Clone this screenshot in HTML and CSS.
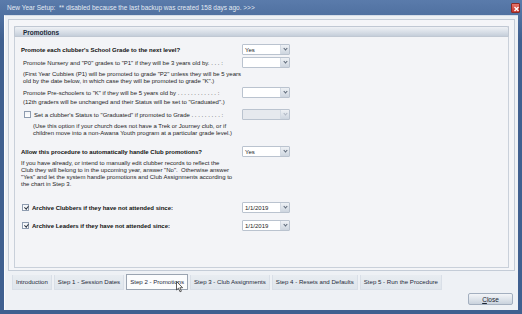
FILE: index.html
```html
<!DOCTYPE html>
<html lang="en">
  <head>
    <meta charset="UTF-8" />
    <meta name="viewport" content="width=device-width, initial-scale=1.0" />
    <title>New Year Setup</title>
    <link rel="stylesheet" href="styles.css">
  </head>
  <body>
    <div class="window">
      <div class="titlebar">
        <span class="title">New Year Setup:&nbsp; ** disabled because the last backup was created 158 days ago. &gt;&gt;&gt;</span>
        <span class="close_x">
          <svg width="9" height="10" viewBox="0 0 9 10"><path d="M2.5 3 L6.5 7 M6.5 3 L2.5 7" stroke="#fff" stroke-width="1.4" /></svg>
        </span>
      </div>

      <div class="client">
        <div class="page">
          <div class="group">
            <div class="group_head">Promotions</div>
            <div class="group_body">
              <div class="row r1">
                <span class="label bold">Promote each clubber's School Grade to the next level?</span>
                <div class="combo"><span>Yes</span><i></i></div>
              </div>
              <div class="row r2">
                <span class="label indent">Promote Nursery and "P0" grades to "P1" if they will be 3 years old by. . . . :</span>
                <div class="combo"><span></span><i></i></div>
              </div>
              <p class="note n1">(First Year Cubbies (P1) will be promoted to grade "P2" unless they will be 5 years<br>old by the date below, in which case they will be promoted to grade "K".)</p>
              <div class="row r3">
                <span class="label indent">Promote Pre-schoolers to "K" if they will be 5 years old by . . . . . . . . . . . . :</span>
                <div class="combo"><span></span><i></i></div>
              </div>
              <p class="note n2">(12th graders will be unchanged and their Status will be set to "Graduated".)</p>
              <div class="row r4">
                <span class="label check_label"><b class="check"></b>Set a clubber's Status to "Graduated" if promoted to Grade . . . . . . . . . :</span>
                <div class="combo disabled"><span></span><i></i></div>
              </div>
              <p class="note n3">(Use this option if your church does not have a Trek or Journey club, or if<br>children move into a non-Awana Youth program at a particular grade level.)</p>
              <div class="row r5">
                <span class="label bold">Allow this procedure to automatically handle Club promotions?</span>
                <div class="combo"><span>Yes</span><i></i></div>
              </div>
              <p class="para">If you have already, or intend to manually edit clubber records to reflect the<br>Club they will belong to in the upcoming year, answer "No".&nbsp; Otherwise answer<br>"Yes" and let the system handle promotions and Club Assignments according to<br>the chart in Step 3.</p>
              <div class="row r6">
                <span class="label bold check_label"><b class="check on"></b>Archive Clubbers if they have not attended since:</span>
                <div class="combo"><span>1/1/2019</span><i></i></div>
              </div>
              <div class="row r7">
                <span class="label bold check_label"><b class="check on"></b>Archive Leaders if they have not attended since:</span>
                <div class="combo"><span>1/1/2019</span><i></i></div>
              </div>
            </div>
          </div>
        </div>

        <div class="tabs">
          <span class="tab">Introduction</span>
          <span class="tab">Step 1 - Session Dates</span>
          <span class="tab active">Step 2 - Promotions
            <svg class="cursor" width="8" height="12" viewBox="0 0 8 12"><path d="M0.5 0.5 L0.5 9 L2.5 7.2 L4 10.8 L5.4 10.2 L3.9 6.7 L6.6 6.7 Z" fill="#fff" stroke="#333" stroke-width="0.8" /></svg>
          </span>
          <span class="tab">Step 3 - Club Assignments</span>
          <span class="tab">Step 4 - Resets and Defaults</span>
          <span class="tab">Step 5 - Run the Procedure</span>
        </div>

        <div class="footer">
          <button class="close_btn"><u>C</u>lose</button>
        </div>
      </div>
    </div>
  </body>
</html>
```

FILE: styles.css
```css
* {
  margin: 0;
  padding: 0;
  box-sizing: border-box;
}

body {
  width: 522px;
  height: 314px;
  overflow: hidden;
  background: #46689a;
  font-family: "Liberation Sans", Arial, sans-serif;
  font-size: 6px;
  color: #1e1e1e;
}

.window {
  height: 314px;
  display: flex;
  flex-direction: column;
  padding: 0 4px 4px 4px;
  background: linear-gradient(#5a7bab, #3f6090 40px, #3f6090);
}

.titlebar {
  height: 15px;
  display: flex;
  align-items: center;
  justify-content: space-between;
  padding: 0 0 0 3px;
  margin-right: -2px;

  .title {
    color: #e3eaf3;
    font-size: 6.5px;
  }

  .close_x {
    width: 9px;
    height: 10px;
    margin-top: 1px;
    background: linear-gradient(#e8766b, #c8332a);
    border: 1px solid #8e2a24;
    border-radius: 1px;
    display: grid;
    place-items: center;

    svg {
      display: block;
    }
  }
}

.client {
  flex: 1;
  display: flex;
  flex-direction: column;
  background: #eef1f5;
  border-top: 1px solid #d5dde8;
  border-left: 1px solid #fbfcfe;
  padding: 3px 3px 0 3px;
}

.page {
  height: 252px;
  background: #f4f5f8;
  border: 1px solid #c4ccd7;
  padding: 6px 5px 2px 5px;
}

.group {
  height: 100%;
  border: 1px solid #c9d0da;
  border-top: none;
  background: #f3f4f7;
  display: flex;
  flex-direction: column;
}

.group_head {
  height: 11px;
  line-height: 11px;
  padding-left: 8px;
  font-weight: bold;
  font-size: 6.5px;
  color: #1c2a3a;
  background: linear-gradient(#eef1f5, #d6dde6 60%, #c5ceda);
  border: 1px solid #c0c8d3;
  border-radius: 2px 2px 0 0;
  margin: 0 -1px;
}

.group_body {
  padding: 6px 0 0 6px;
  display: flex;
  flex-direction: column;
}

.row {
  display: grid;
  grid-template-columns: 221px 48px;
  align-items: center;
  height: 11px;
}

.label {
  white-space: nowrap;
  display: flex;
  align-items: center;
}

.bold {
  font-weight: bold;
  color: #111;
}

.indent {
  padding-left: 2px;
}

.check_label {
  padding-left: 3px;
}

.bold.check_label {
  padding-left: 1px;
}

.check {
  width: 7px;
  height: 7px;
  border: 1px solid #8e9cb0;
  background: linear-gradient(#f2f4f7, #fff);
  margin-right: 3px;
  position: relative;

  &.on::after {
    content: "";
    position: absolute;
    left: 1.5px;
    top: 0;
    width: 1.5px;
    height: 3px;
    border: solid #2a3340;
    border-width: 0 1px 1px 0;
    transform: rotate(40deg);
  }
}

.note {
  line-height: 7px;
  padding-left: 2px;
  white-space: nowrap;
}

.para {
  line-height: 7px;
  white-space: nowrap;
}

.combo {
  height: 11px;
  border: 1px solid #bac3cf;
  border-radius: 1px;
  background: #fff;
  display: flex;
  align-items: center;

  span {
    flex: 1;
    padding-left: 2px;
    font-size: 6px;
  }

  i {
    width: 9px;
    height: 9px;
    background: linear-gradient(#eef1f5, #cdd5df);
    border-left: 1px solid #d3dae3;
    position: relative;

    &::after {
      content: "";
      position: absolute;
      left: 3px;
      top: 2px;
      width: 2px;
      height: 2px;
      border: solid #5a6676;
      border-width: 0 1px 1px 0;
      transform: rotate(45deg);
    }
  }

  &.disabled {
    background: #e6e9ee;

    i::after {
      border-color: #b0b8c4;
    }
  }
}

.r1 { margin-top: 1px; }
.r2 { margin-top: 2px; }
.n1 { margin-top: 3px; }
.r3 { margin-top: 2px; }
.n2 { margin-top: 1px; }
.r4 { margin-top: 3px; }
.n3 { margin-top: 3px; padding-left: 12px; }
.r5 { margin-top: 9px; }
.para { margin-top: 3px; }
.r6 { margin-top: 14px; }
.r7 { margin-top: 7px; }

.tabs {
  display: flex;
  gap: 2px;
  padding-left: 4px;
  margin-top: 4px;
  height: 15px;

  .tab {
    height: 15px;
    line-height: 13px;
    padding: 0 3px;
    border: 1px solid #d9dfe7;
    border-top: none;
    background: linear-gradient(#e8ecf1, #dfe5ec);
    font-size: 6.1px;
    color: #1e2a3a;
    white-space: nowrap;
    position: relative;

    &.active {
      background: #fbfcfd;
      border: 1px solid #9aa4b1;
      margin-top: -1px;
      height: 16px;
      line-height: 14px;
    }
  }

  .cursor {
    position: absolute;
    left: 49px;
    top: 6px;
  }
}

.footer {
  display: flex;
  justify-content: flex-end;
  padding: 3px 2px 0 0;

  .close_btn {
    width: 45px;
    height: 12px;
    font-family: inherit;
    font-size: 6.5px;
    color: #1b2533;
    border: 1px solid #a3afbf;
    border-radius: 2px;
    background: linear-gradient(#f3f5f8, #dde3ea 55%, #c9d2dd);
  }
}
```
